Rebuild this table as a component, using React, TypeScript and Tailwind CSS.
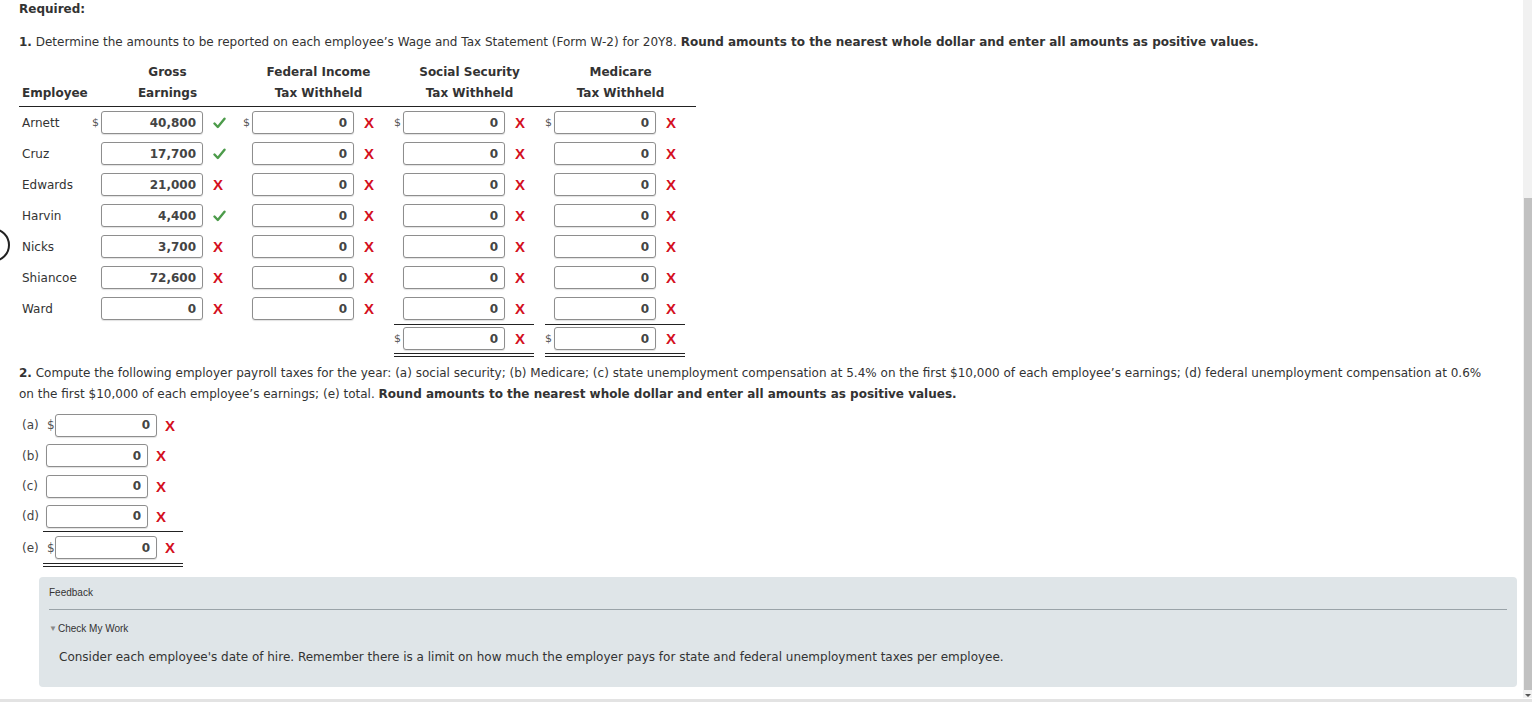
import React from "react";

const font = { fontFamily: '"DejaVu Sans", Verdana, sans-serif' };

function Check() {
  return (
    <svg width="13" height="12" viewBox="0 0 13 12" className="block">
      <path d="M1.5 6.5 L4.8 10 L11.5 1.8" fill="none" stroke="#4c9b4a" strokeWidth="2.4" strokeLinecap="round" strokeLinejoin="round" />
    </svg>
  );
}

function XMark() {
  return (
    <span className="font-bold text-[15px] leading-none text-[#d40f1e]" style={{ fontFamily: '"Liberation Sans", Arial, sans-serif' }}>
      X
    </span>
  );
}

function Box({ value }: { value: string }) {
  return (
    <div className="w-[102px] shrink-0 h-[23px] border border-[#8e8e8e] rounded-[3px] bg-white flex items-center justify-end pr-[6px] font-bold text-[12px] text-[#444] shadow-[0_1px_1px_rgba(0,0,0,0.12)]">
      {value}
    </div>
  );
}

function Group({ dollar, value, mark }: { dollar: boolean; value: string; mark: "c" | "x" }) {
  return (
    <div className="flex items-center w-[151px] shrink-0">
      <div className="w-[9px] shrink-0 text-[11px] text-[#555] leading-none">{dollar ? "$" : ""}</div>
      <Box value={value} />
      <div className="w-[40px] shrink-0 pl-[10px] flex items-center">{mark === "c" ? <Check /> : <XMark />}</div>
    </div>
  );
}

const rows: [string, string, "c" | "x"][] = [
  ["Arnett", "40,800", "c"],
  ["Cruz", "17,700", "c"],
  ["Edwards", "21,000", "x"],
  ["Harvin", "4,400", "c"],
  ["Nicks", "3,700", "x"],
  ["Shiancoe", "72,600", "x"],
  ["Ward", "0", "x"],
];

function Part2Row({ label, dollar, h }: { label: string; dollar: boolean; h: string }) {
  return (
    <div className={`flex items-center ${h}`}>
      <div className="w-[24px] shrink-0 pl-[3px] text-[12px] text-[#444]">{label}</div>
      {dollar ? <div className="w-[12px] shrink-0 pl-[4px] text-[12px] text-[#555]">$</div> : <div className="w-[3px] shrink-0" />}
      <Box value="0" />
      <div className="pl-[8px] flex items-center">
        <XMark />
      </div>
    </div>
  );
}

export default function App() {
  return (
    <div className="relative w-[1532px] h-[702px] overflow-hidden bg-white text-[#333]" style={font}>
      <div className="w-[1523px] pl-[19px] pr-[20px]">
        <div className="pt-[1px] h-[19px] text-[12px] font-bold leading-[16px]">Required:</div>
        <div className="mt-[14px] text-[12px] leading-[18px]">
          <span className="font-bold">1.</span> Determine the amounts to be reported on each employee’s Wage and Tax Statement (Form W-2) for 20Y8.{" "}
          <span className="font-bold">Round amounts to the nearest whole dollar and enter all amounts as positive values.</span>
        </div>

        <div className="mt-[11px] w-[677px] text-[12px]">
          <div className="flex border-b border-[#222] pb-[2px]">
            <div className="w-[73px] shrink-0 pl-[3px] flex items-end font-bold leading-[21px]">Employee</div>
            {[
              ["Gross", "Earnings"],
              ["Federal Income", "Tax Withheld"],
              ["Social Security", "Tax Withheld"],
              ["Medicare", "Tax Withheld"],
            ].map(([a, b]) => (
              <div key={a} className="w-[151px] shrink-0 text-center font-bold leading-[21px]">
                <div>{a}</div>
                <div>{b}</div>
              </div>
            ))}
          </div>
          {rows.map(([name, gross, m]) => {
            const first = name === "Arnett";
            return (
              <div key={name} className="flex items-center h-[31px]">
                <div className="w-[73px] shrink-0 pl-[3px]">{name}</div>
                <Group dollar={first} value={gross} mark={m} />
                <Group dollar={first} value="0" mark="x" />
                <Group dollar={first} value="0" mark="x" />
                <Group dollar={first} value="0" mark="x" />
              </div>
            );
          })}
          <div className="flex">
            <div className="w-[375px] shrink-0" />
            <div className="w-[151px] shrink-0">
              <div className="w-[140px] border-t border-b-[4px] border-double border-[#222] pt-[2px] pb-[3px]">
                <Group dollar value="0" mark="x" />
              </div>
            </div>
            <div className="w-[151px] shrink-0">
              <div className="w-[140px] border-t border-b-[4px] border-double border-[#222] pt-[2px] pb-[3px]">
                <Group dollar value="0" mark="x" />
              </div>
            </div>
          </div>
        </div>

        <div className="mt-[6px] w-[1474px] text-[12px] leading-[21px]">
          <span className="font-bold">2.</span> Compute the following employer payroll taxes for the year: (a) social security; (b) Medicare; (c) state unemployment compensation at 5.4% on the first $10,000 of each employee’s earnings; (d) federal unemployment compensation at 0.6% on the first $10,000 of each employee’s earnings; (e) total.{" "}
          <span className="font-bold">Round amounts to the nearest whole dollar and enter all amounts as positive values.</span>
        </div>

        <div className="mt-[5px]">
          <Part2Row label="(a)" dollar h="h-[30px]" />
          <Part2Row label="(b)" dollar={false} h="h-[31px]" />
          <Part2Row label="(c)" dollar={false} h="h-[30px]" />
          <Part2Row label="(d)" dollar={false} h="h-[30px]" />
          <div className="ml-[24px] w-[140px] border-t border-b-[4px] border-double border-[#222] h-[36px] flex items-center">
            <div className="flex items-center -ml-[24px]">
              <div className="w-[24px] shrink-0 pl-[3px] text-[12px] text-[#444]">(e)</div>
              <div className="w-[12px] shrink-0 pl-[4px] text-[12px] text-[#555]">$</div>
              <Box value="0" />
              <div className="pl-[8px] flex items-center">
                <XMark />
              </div>
            </div>
          </div>
        </div>

        <div className="mt-[10px] ml-[20px] w-[1478px] h-[110px] rounded-[4px] bg-[#dfe5e8] px-[10px] pt-[10px]">
          <div className="text-[10px] text-[#333] leading-[12px]" style={{ fontFamily: '"Liberation Sans", Arial, sans-serif' }}>Feedback</div>
          <div className="mt-[10px] border-t border-[#9aa3a8]" />
          <div className="mt-[13px] text-[10px] text-[#333] leading-[12px] flex items-center" style={{ fontFamily: '"Liberation Sans", Arial, sans-serif' }}>
            <span className="text-[8px] text-[#888] mr-[1px]">▼</span>Check My Work
          </div>
          <div className="mt-[14px] pl-[10px] text-[12px] leading-[16px] text-[#333]">
            Consider each employee's date of hire. Remember there is a limit on how much the employer pays for state and federal unemployment taxes per employee.
          </div>
        </div>
      </div>

      {/* scrollbar */}
      <div className="absolute right-0 top-0 w-[9px] h-[698px] bg-[#f1f1f1]">
        <div className="absolute left-[1px] right-0 top-[198px] h-[492px] bg-[#c1c1c1]" />
        <div className="absolute bottom-[1px] left-[2px] w-0 h-0 border-l-[3px] border-r-[3px] border-t-[3px] border-l-transparent border-r-transparent border-t-[#555]" />
      </div>
      <div className="absolute left-0 right-0 bottom-0 h-[3px] bg-[#e3e3e3]" />

      {/* circle marker */}
      <div className="absolute left-[-24px] top-[228px] w-[34px] h-[34px] rounded-full border-2 border-[#222]" />
    </div>
  );
}
